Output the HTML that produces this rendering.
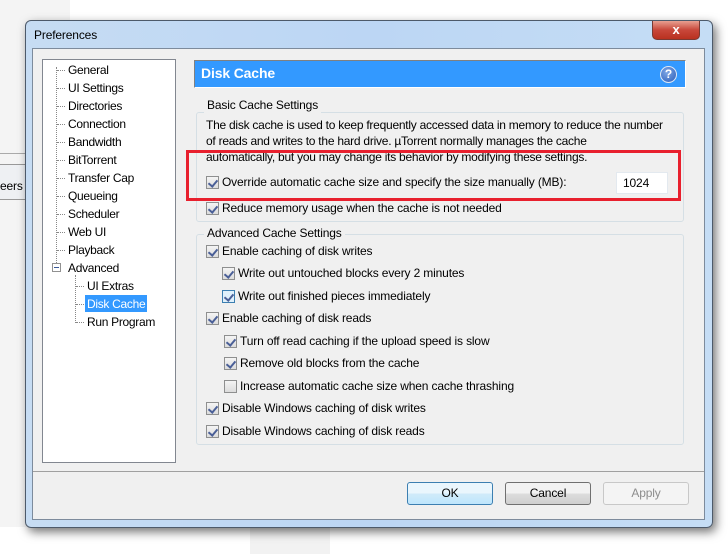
<!DOCTYPE html><html><head><style>
*{margin:0;padding:0;box-sizing:border-box}
body{width:728px;height:554px;position:relative;overflow:hidden;background:#fff;font-family:"Liberation Sans",sans-serif;font-size:12px;color:#000;letter-spacing:-0.15px}
.a{position:absolute}
.t{position:absolute;white-space:nowrap;line-height:15px}
.cb{position:absolute;width:13px;height:13px;border:1px solid #8e8f8f;background:linear-gradient(#f4f4f4,#dcdcdc)}
.cb.c::after{content:"";position:absolute;left:3px;top:1px;width:4px;height:7px;border:solid #4a5f97;border-width:0 2px 2px 0;transform:rotate(40deg)}
.dot{position:absolute;border-top:1px dotted #888;width:8px}
.btn{position:absolute;height:23px;border:1px solid #707070;border-radius:3px;background:linear-gradient(#f2f2f2 50%,#dddddd 50%,#cfcfcf);text-align:center;line-height:21px}
</style></head><body>
<div class="a" style="left:0;top:0;width:70px;height:527px;background:#f4f4f4"></div>
<div class="a" style="left:0;top:153px;width:70px;height:1px;background:#aaa"></div>
<div class="a" style="left:0;top:164px;width:26px;height:36px;background:#eef0f3;border-top:1px solid #999;border-bottom:1px solid #999"></div>
<div class="t" style="left:0;top:179px">eers</div>
<div class="a" style="left:250px;top:527px;width:80px;height:27px;background:#f2f2f2"></div>
<!-- window -->
<div class="a" style="left:25px;top:20px;width:688px;height:508px;border:1px solid #4d5a6a;border-radius:6px;background:linear-gradient(90deg,#c6dcf3,#bcd6f4 50%,#c5ddf5);box-shadow:3px 4px 10px rgba(0,0,0,.55)"></div>
<div class="t" style="left:34px;top:28px">Preferences</div>
<div class="a" style="left:652px;top:21px;width:48px;height:19px;border:1px solid #7a3a33;border-top:none;border-radius:0 0 5px 5px;background:linear-gradient(#e8a091,#c8473a 50%,#b9311f);color:#fff;text-align:center;font-weight:bold;font-size:13px;line-height:17px">x</div>
<div class="a" style="left:32px;top:48px;width:673px;height:472px;background:#f0f0f0;border:1px solid #7d8b9c"></div>
<!-- tree -->
<div class="a" style="left:42px;top:59px;width:134px;height:404px;background:#fff;border:1px solid #828790"></div>
<div class="a" style="left:56px;top:67px;height:202px;border-left:1px dotted #888"></div>
<div class="a" style="left:75px;top:275px;height:48px;border-left:1px dotted #888"></div>
<div class="a" style="left:52px;top:263px;width:9px;height:9px;border:1px solid #919191;background:#fff"></div>
<div class="a" style="left:54px;top:267px;width:5px;height:1px;background:#3b5998"></div>
<div style="letter-spacing:-0.3px">
<div class="dot" style="left:57px;top:70px"></div><div class="t" style="left:68px;top:63px">General</div>
<div class="dot" style="left:57px;top:88px"></div><div class="t" style="left:68px;top:81px">UI Settings</div>
<div class="dot" style="left:57px;top:106px"></div><div class="t" style="left:68px;top:99px">Directories</div>
<div class="dot" style="left:57px;top:124px"></div><div class="t" style="left:68px;top:117px">Connection</div>
<div class="dot" style="left:57px;top:142px"></div><div class="t" style="left:68px;top:135px">Bandwidth</div>
<div class="dot" style="left:57px;top:160px"></div><div class="t" style="left:68px;top:153px">BitTorrent</div>
<div class="dot" style="left:57px;top:178px"></div><div class="t" style="left:68px;top:171px">Transfer Cap</div>
<div class="dot" style="left:57px;top:196px"></div><div class="t" style="left:68px;top:189px">Queueing</div>
<div class="dot" style="left:57px;top:214px"></div><div class="t" style="left:68px;top:207px">Scheduler</div>
<div class="dot" style="left:57px;top:232px"></div><div class="t" style="left:68px;top:225px">Web UI</div>
<div class="dot" style="left:57px;top:250px"></div><div class="t" style="left:68px;top:243px">Playback</div>
<div class="t" style="left:68px;top:261px">Advanced</div>
<div class="dot" style="left:76px;top:286px"></div><div class="t" style="left:87px;top:279px">UI Extras</div>
<div class="dot" style="left:76px;top:304px"></div><div class="a" style="left:85px;top:295px;width:62px;height:17px;background:#3399ff"></div><div class="t" style="left:87px;top:297px;color:#fff">Disk Cache</div>
<div class="dot" style="left:76px;top:322px"></div><div class="t" style="left:87px;top:315px">Run Program</div>
</div>
<!-- header -->
<div class="a" style="left:194px;top:60px;width:492px;height:28px;background:#3399ff;border:1px solid #808080;border-right-color:#fff;border-bottom-color:#fff"></div>
<div class="t" style="left:201px;top:66px;color:#fff;font-weight:bold;font-size:14px">Disk Cache</div>
<div class="a" style="left:660px;top:66px;width:17px;height:17px;border-radius:50%;border:1px solid #dfe8f5;background:radial-gradient(circle at 40% 35%,#7ea7e6,#2c5db8);color:#fff;font-weight:bold;font-size:12px;text-align:center;line-height:15px">?</div>
<!-- basic group -->
<div class="a" style="left:196px;top:112px;width:488px;height:110px;border:1px solid #d5dfe5;border-radius:3px"></div>
<div class="t" style="left:204px;top:98px;background:#f0f0f0;padding:0 3px">Basic Cache Settings</div>
<div class="t" style="left:206px;top:117px;line-height:16px;letter-spacing:-0.25px">The disk cache is used to keep frequently accessed data in memory to reduce the number<br>of reads and writes to the hard drive. µTorrent normally manages the cache<br>automatically, but you may change its behavior by modifying these settings.</div>
<div class="cb c" style="left:206px;top:176px"></div><div class="t" style="left:222px;top:175px">Override automatic cache size and specify the size manually (MB):</div>
<div class="a" style="left:616px;top:172px;width:52px;height:22px;background:#fff;border:1px solid #e3e9ef"></div>
<div class="t" style="left:623px;top:176px">1024</div>
<div class="a" style="left:186px;top:150px;width:495px;height:51px;border:3px solid #e8202e"></div>
<div class="cb c" style="left:206px;top:202px"></div><div class="t" style="left:222px;top:201px">Reduce memory usage when the cache is not needed</div>
<!-- advanced group -->
<div class="a" style="left:196px;top:234px;width:488px;height:211px;border:1px solid #d5dfe5;border-radius:3px"></div>
<div class="t" style="left:204px;top:226px;background:#f0f0f0;padding:0 3px">Advanced Cache Settings</div>
<div class="cb c" style="left:206px;top:245px"></div><div class="t" style="left:222px;top:244px">Enable caching of disk writes</div>
<div class="cb c" style="left:222px;top:267px"></div><div class="t" style="left:238px;top:266px">Write out untouched blocks every 2 minutes</div>
<div class="cb c" style="left:222px;top:290px;border-color:#3c7fb1;background:#dff0fb"></div><div class="t" style="left:238px;top:289px">Write out finished pieces immediately</div>
<div class="cb c" style="left:206px;top:312px"></div><div class="t" style="left:222px;top:311px">Enable caching of disk reads</div>
<div class="cb c" style="left:224px;top:335px"></div><div class="t" style="left:240px;top:334px">Turn off read caching if the upload speed is slow</div>
<div class="cb c" style="left:224px;top:357px"></div><div class="t" style="left:240px;top:356px">Remove old blocks from the cache</div>
<div class="cb" style="left:224px;top:380px"></div><div class="t" style="left:240px;top:379px">Increase automatic cache size when cache thrashing</div>
<div class="cb c" style="left:206px;top:402px"></div><div class="t" style="left:222px;top:401px">Disable Windows caching of disk writes</div>
<div class="cb c" style="left:206px;top:425px"></div><div class="t" style="left:222px;top:424px">Disable Windows caching of disk reads</div>
<!-- bottom -->
<div class="a" style="left:33px;top:471px;width:671px;height:1px;background:#a0a0a0"></div>
<div class="btn" style="left:407px;top:482px;width:86px;border-color:#3c7fb1;background:linear-gradient(#eaf6fd 50%,#d1ebf9 50%,#bee6fd)">OK</div>
<div class="btn" style="left:505px;top:482px;width:86px">Cancel</div>
<div class="btn" style="left:603px;top:482px;width:86px;border-color:#c8c8c8;background:#f4f4f4;color:#8d8d8d">Apply</div>
</body></html>
